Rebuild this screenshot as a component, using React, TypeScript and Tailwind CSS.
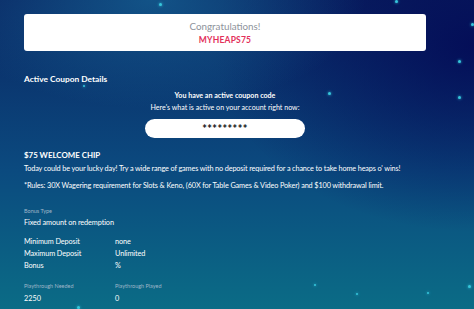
import React from "react";

const dots: [number, number, number][] = [
  [160, 4, 3],
  [396, 1, 3],
  [472, 24, 3],
  [459, 61, 3],
  [459, 97, 3],
  [329, 93, 3],
  [84, 86, 2],
  [315, 285, 2],
  [357, 294, 2],
  [428, 293, 2],
  [469, 286, 3],
  [78, 307, 3],
];

export default function App() {
  return (
    <div
      className="relative w-[474px] h-[309px] overflow-hidden text-white bg-[radial-gradient(ellipse_45%_35%_at_32%_0%,rgba(25,120,165,0.55),transparent_100%),radial-gradient(ellipse_55%_60%_at_100%_15%,rgba(3,8,85,0.85),transparent_100%),linear-gradient(to_bottom,#0a2663_0%,#0b4a7f_55%,#0b6c86_100%)]"
      style={{ fontFamily: "Lato, 'Noto Sans', sans-serif" }}
    >
      {dots.map(([x, y, s], i) => (
        <span
          key={i}
          className="absolute rounded-full bg-[#36c6dc] shadow-[0_0_3px_#36c6dc]"
          style={{ left: x - s / 2, top: y - s / 2, width: s, height: s }}
        />
      ))}
      <div className="relative flex flex-col w-[402px] ml-[24px] pt-[14px]">
        <div className="flex flex-col items-center h-[37px] rounded-[3px] bg-white pt-[5px]">
          <div className="text-[9.8px] leading-[14px] text-[#8e939b]">Congratulations!</div>
          <div className="mt-[1px] text-[8.5px] leading-[12px] font-bold text-[#e3305a] tracking-[0.2px]">MYHEAPS75</div>
        </div>
        <div className="mt-[22px] text-[8.4px] leading-[12px] font-bold">Active Coupon Details</div>
        <div className="mt-[5px] flex flex-col items-center">
          <div className="text-[7.1px] leading-[11px] font-bold">You have an active coupon code</div>
          <div className="mt-[1px] text-[7.1px] leading-[11px]">Here's what is active on your account right now:</div>
          <div className="mt-[6px] flex items-center justify-center w-[160px] h-[19px] rounded-full bg-white text-[#1a1a1a] text-[11px] font-black tracking-[0.4px] pt-[2px]">
            *********
          </div>
        </div>
        <div className="mt-[12px] text-[7.9px] leading-[11px] font-bold">$75 WELCOME CHIP</div>
        <div className="mt-[2px] text-[7.3px] leading-[11px] tracking-[-0.14px]">
          Today could be your lucky day! Try a wide range of games with no deposit required for a chance to take home heaps o' wins!
        </div>
        <div className="mt-[6px] text-[7.3px] leading-[11px] tracking-[-0.12px]">
          *Rules: 30X Wagering requirement for Slots &amp; Keno, (60X for Table Games &amp; Video Poker) and $100 withdrawal limit.
        </div>
        <div className="mt-[16px] text-[5.5px] leading-[8px] text-[#9fb6c8]">Bonus Type</div>
        <div className="mt-[2px] text-[7.3px] leading-[11px] tracking-[-0.1px]">Fixed amount on redemption</div>
        <div className="mt-[8px] grid grid-cols-[91px_1fr] text-[7.3px] leading-[12px] tracking-[-0.1px]">
          <div>Minimum Deposit</div>
          <div>none</div>
          <div>Maximum Deposit</div>
          <div>Unlimited</div>
          <div>Bonus</div>
          <div>%</div>
        </div>
        <div className="mt-[10px] grid grid-cols-[91px_1fr]">
          <div className="text-[5.5px] leading-[8px] text-[#9fb6c8]">Playthrough Needed</div>
          <div className="text-[5.5px] leading-[8px] text-[#9fb6c8]">Playthrough Played</div>
          <div className="mt-[3px] text-[7.3px] leading-[11px]">2250</div>
          <div className="mt-[3px] text-[7.3px] leading-[11px]">0</div>
        </div>
      </div>
    </div>
  );
}
